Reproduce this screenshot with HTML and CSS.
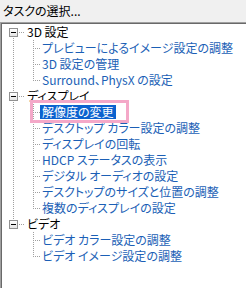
FILE: index.html
```html
<!DOCTYPE html>
<html lang="ja">
<head>
<meta charset="UTF-8">
<title>タスクの選択</title>
<link rel="stylesheet" href="styles.css">
</head>
<body>
<div class="header">タスクの選択...</div>
<div class="panel">
    <ul class="tree">
        <li class="node first">
            <div class="row root"><span class="toggle"></span><span class="dash"></span><span class="label">3D 設定</span></div>
            <ul class="children">
                <li class="leaf"><span class="label">プレビューによるイメージ設定の調整</span></li>
                <li class="leaf"><span class="label">3D 設定の管理</span></li>
                <li class="leaf last"><span class="label">Surround、PhysX の設定</span></li>
            </ul>
        </li>
        <li class="node">
            <div class="row root"><span class="toggle"></span><span class="dash"></span><span class="label">ディスプレイ</span></div>
            <ul class="children">
                <li class="leaf"><span class="label selected">解像度の変更</span></li>
                <li class="leaf"><span class="label">デスクトップ カラー設定の調整</span></li>
                <li class="leaf"><span class="label">ディスプレイの回転</span></li>
                <li class="leaf"><span class="label">HDCP ステータスの表示</span></li>
                <li class="leaf"><span class="label">デジタル オーディオの設定</span></li>
                <li class="leaf"><span class="label">デスクトップのサイズと位置の調整</span></li>
                <li class="leaf last"><span class="label">複数のディスプレイの設定</span></li>
            </ul>
        </li>
        <li class="node last">
            <div class="row root"><span class="toggle"></span><span class="dash"></span><span class="label">ビデオ</span></div>
            <ul class="children">
                <li class="leaf"><span class="label">ビデオ カラー設定の調整</span></li>
                <li class="leaf last"><span class="label">ビデオ イメージ設定の調整</span></li>
            </ul>
        </li>
    </ul>
</div>
</body>
</html>
```

FILE: styles.css
```css
body {
    margin: 0;
    width: 246px;
    height: 288px;
    background: #fff;
    font: 12px/16px "Noto Sans CJK JP", sans-serif;
    font-feature-settings: "palt";
    color: #000;
    overflow: hidden;
}
.header {
    height: 22px;
    line-height: 22px;
    padding-left: 3px;
    background: #f0f0f0;
}
.panel {
    height: 266px;
    box-sizing: border-box;
    border-top: 1px solid #a0a0a0;
    border-left: 1px solid #a0a0a0;
    box-shadow: inset 1px 1px 0 #696969;
    padding: 1px 0 0 1px;
}
.tree,
.children {
    list-style: none;
    margin: 0;
    padding: 0;
}
/* root connector line */
.node {
    background: repeating-linear-gradient(to bottom, #a0a0a0 0 1px, transparent 1px 2px) 11px 0 / 1px 100% no-repeat;
}
.node.first {
    background:
        linear-gradient(#fff, #fff) 11px 0 / 1px 8px no-repeat,
        repeating-linear-gradient(to bottom, #a0a0a0 0 1px, transparent 1px 2px) 11px 0 / 1px 100% no-repeat;
}
.node.last {
    background: repeating-linear-gradient(to bottom, #a0a0a0 0 1px, transparent 1px 2px) 11px 0 / 1px 8px no-repeat;
}
.row {
    display: flex;
    align-items: center;
    height: 16px;
}
.toggle {
    width: 9px;
    height: 9px;
    box-sizing: border-box;
    margin-left: 7px;
    border: 1px solid #919191;
    background: linear-gradient(#000, #000) center / 5px 1px no-repeat, linear-gradient(#fff, #e4e4e4);
}
.dash {
    width: 6px;
    height: 1px;
    margin: 0 1px 0 1px;
    background: repeating-linear-gradient(to right, #a0a0a0 0 1px, transparent 1px 2px);
}
.root .label {
    padding: 0 1px;
}
.leaf {
    display: flex;
    align-items: center;
    height: 16px;
    padding-left: 38px;
    color: #1b5fb6;
    background:
        repeating-linear-gradient(to bottom, #a0a0a0 0 1px, transparent 1px 2px) 31px 0 / 1px 100% no-repeat,
        repeating-linear-gradient(to right, #a0a0a0 0 1px, transparent 1px 2px) 33px 8px / 6px 1px no-repeat;
}
.leaf.last {
    background:
        repeating-linear-gradient(to bottom, #a0a0a0 0 1px, transparent 1px 2px) 31px 0 / 1px 9px no-repeat,
        repeating-linear-gradient(to right, #a0a0a0 0 1px, transparent 1px 2px) 33px 8px / 6px 1px no-repeat;
}
.leaf .label {
    padding: 0 2px;
    line-height: 14px;
    white-space: nowrap;
}
.selected {
    position: relative;
    background: #0b62cf;
    color: #fff;
}
/* pink annotation frame */
.selected::after {
    content: "";
    position: absolute;
    left: -10px;
    right: -13px;
    top: -5px;
    bottom: -4px;
    border: 3px solid #f4a8c8;
}
```
